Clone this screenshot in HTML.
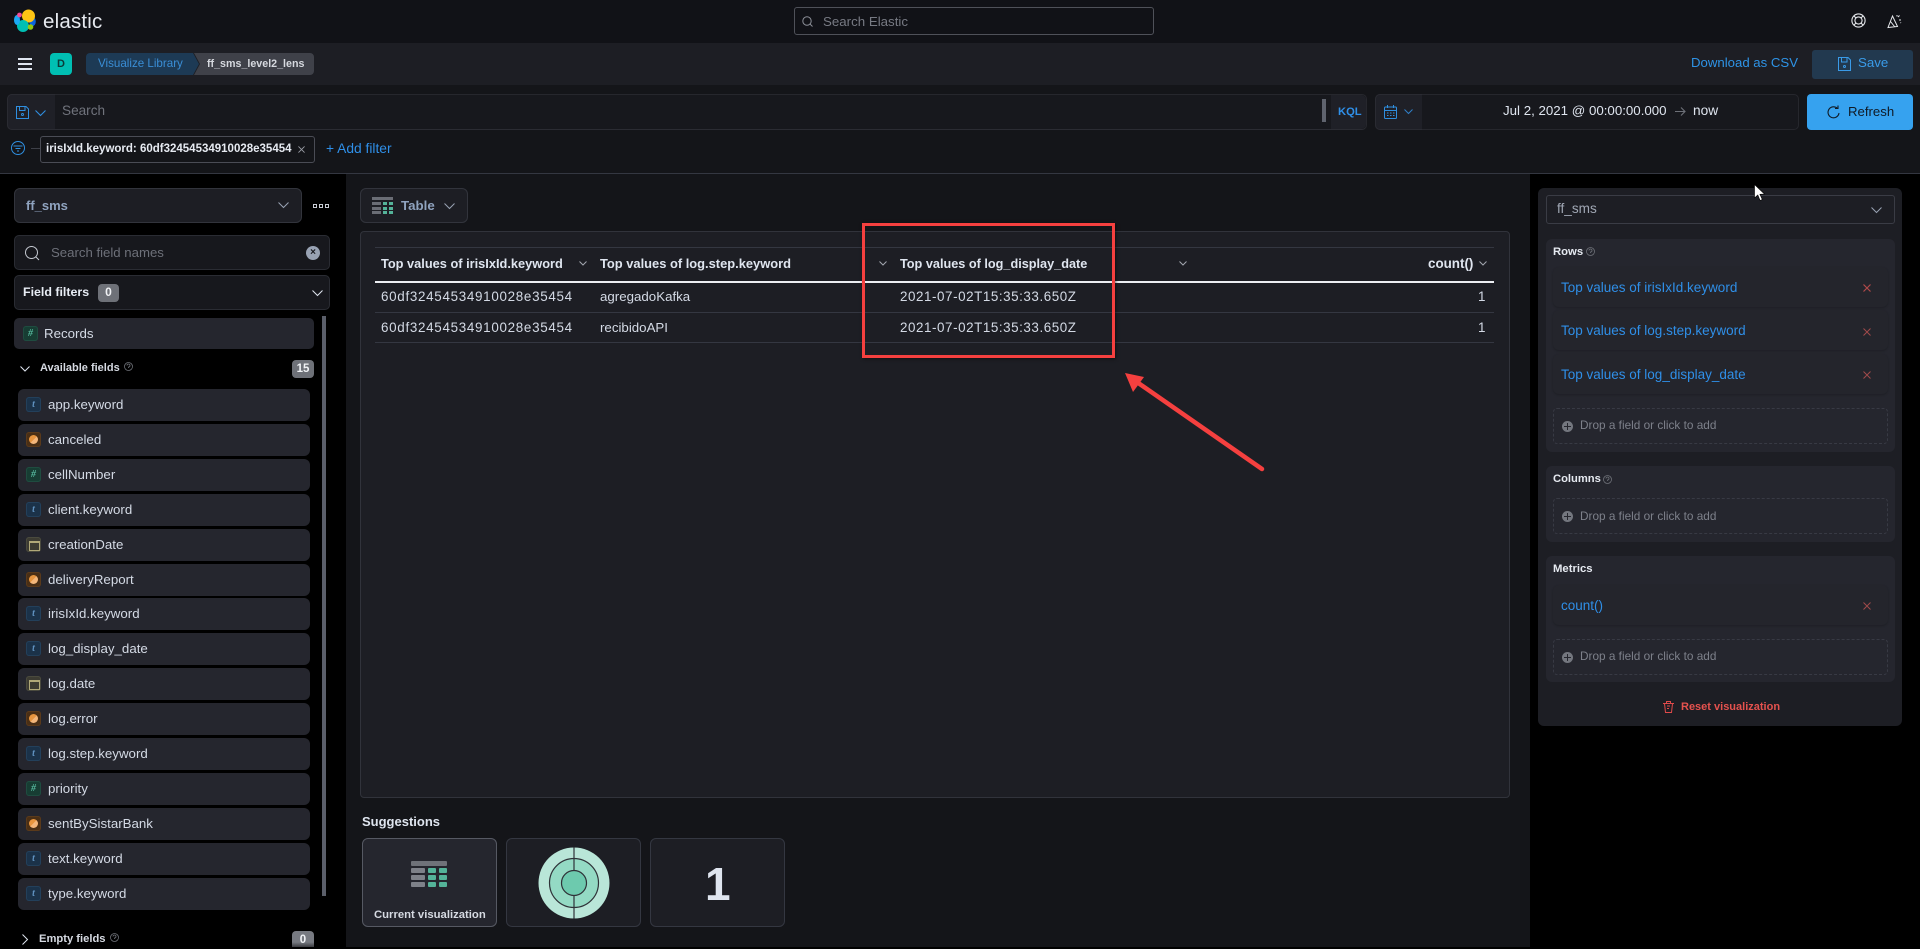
<!DOCTYPE html>
<html lang="en"><head><meta charset="utf-8"><title>ff_sms_level2_lens - Elastic</title>
<style>
*{box-sizing:border-box}
html,body{margin:0;padding:0;width:1920px;height:947px;overflow:hidden;background:#000;font-family:"Liberation Sans",sans-serif;color:#dfe5ef}
.a{position:absolute}
.t{position:absolute;white-space:nowrap;line-height:20px;height:20px;font-size:14px;margin-top:1px}
.b{font-weight:700}
.fld{position:absolute;left:18px;width:292px;height:32px;background:#25262e;border-radius:6px}
.fld .t{left:30px;top:6px;color:#d4dae5;font-size:13.3px;margin-top:0}
.tok{position:absolute;left:8px;top:8px;width:15px;height:15px;border-radius:3px;font:italic 700 10px/15px "Liberation Serif",serif;text-align:center}
.s{background:#1b3249;color:#6092c0;box-shadow:inset 0 0 0 1px #23405b}
.n{background:#173d33;color:#54b399;box-shadow:inset 0 0 0 1px #1f4c40}
.o{background:#4a2f15;box-shadow:inset 0 0 0 1px #5a3a1b}
.o:after{content:"";position:absolute;left:3px;top:3px;width:9px;height:9px;border-radius:50%;background:linear-gradient(135deg,#e7953f 50%,#f3b67a 50%)}
.d{background:#3c3b32;box-shadow:inset 0 0 0 1px #4a4a3e}
.d:after{content:"";position:absolute;left:3px;top:4px;width:9px;height:7px;border:1px solid #b0a878;border-top-width:2px}
.box{position:absolute;background:#1d1e24;border:1px solid #343741;border-radius:6px}
.grp{position:absolute;left:1546px;width:349px;background:#25262e;border-radius:6px}
.item{position:absolute;left:1553px;width:335px;height:40px;background:#24252c;border-radius:6px;box-shadow:0 1px 2px rgba(0,0,0,.2)}
.item .t{left:8px;top:10px;color:#2f8fe8;font-size:13.5px}
.drop{position:absolute;left:1553px;width:335px;height:36px;border:1px dashed #383a44;border-radius:4px}
.drop .t{left:26px;top:5px;font-size:11.8px;color:#7d808a}
.drop i{position:absolute;left:8px;top:12px;width:11px;height:11px;border-radius:50%;background:#74777f}
.drop i:before{content:"";position:absolute;left:2px;top:5px;width:7px;height:1px;background:#25262e}
.drop i:after{content:"";position:absolute;left:5px;top:2px;width:1px;height:7px;background:#25262e}
.tile{position:absolute;top:838px;width:135px;height:89px;background:#1d1e24;border:1px solid #343741;border-radius:6px}
.hr{position:absolute;height:1px;background:#343741}
.id{letter-spacing:.7px}
.dt{letter-spacing:.56px}
svg{position:absolute;overflow:visible}
</style></head><body>

<!-- top header -->
<div class="a" style="left:0;top:0;width:1920px;height:43px;background:#111217"></div>
<svg style="left:14px;top:10px" width="22" height="22" viewBox="0 0 22 22">
<ellipse cx="18.500" cy="11.500" rx="3.300" ry="4.600" fill="#0b64dd"/><circle cx="14.500" cy="6" r="6.500" fill="#fec514"/><circle cx="9" cy="16" r="6" fill="#00bfb3"/><ellipse cx="3" cy="10" rx="3" ry="5" fill="#1ba9f5"/><circle cx="5.500" cy="5" r="2.400" fill="#f04e98"/><circle cx="16.500" cy="17" r="2.800" fill="#93c90e"/></svg>
<div class="t" style="left:43px;top:11px;font-size:20.500px;color:#e6e9ef;letter-spacing:.2px">elastic</div>
<div class="a" style="left:794px;top:7px;width:360px;height:28px;border:1px solid #4f5159;border-radius:3px;background:#111217"></div>
<svg style="left:802px;top:16px" width="11" height="11" viewBox="0 0 11 11" fill="none" stroke="#8d9099" stroke-width="1"><circle cx="5" cy="5" r="4.200"/><path d="M8 8l2.500 2.500"/></svg>
<div class="t" style="left:823px;top:11px;font-size:13.300px;color:#777a83">Search Elastic</div>
<svg style="left:1851px;top:13px" width="15" height="15" viewBox="0 0 15 15" fill="none" stroke="#e8eaee" stroke-width="1.100"><circle cx="7.500" cy="7.500" r="6.600"/><circle cx="7.500" cy="7.500" r="3.600"/><path d="M3 3l2 2M12 3l-2 2M3 12l2-2M12 12l-2-2"/></svg>
<svg style="left:1887px;top:14px" width="15" height="15" viewBox="0 0 15 15" fill="none" stroke="#e8eaee" stroke-width="1"><path d="M1 13.500L5.500 2 10.500 12.500zM3.500 7.500l4 5M11 3l1.500-1.500M12 6h2M10 1v1.500M13.500 8.500l.5.5"/></svg>

<!-- nav -->
<div class="a" style="left:0;top:43px;width:1920px;height:42px;background:#1d1e24"></div>
<div class="a" style="left:18px;top:58px;width:14px;height:2px;background:#dfe5ef;box-shadow:0 5px 0 #dfe5ef,0 10px 0 #dfe5ef"></div>
<div class="a" style="left:50px;top:53px;width:22px;height:22px;border-radius:4px;background:#00bfb3;color:#0a3b38;font:700 11px/22px 'Liberation Sans',sans-serif;text-align:center">D</div>
<svg style="left:86px;top:53px" width="228" height="22" viewBox="0 0 228 22"><path d="M4 0H107l6 11-6 11H4a4 4 0 0 1-4-4V4a4 4 0 0 1 4-4z" fill="#1d3a55" /><path d="M108 0H224a4 4 0 0 1 4 4V18a4 4 0 0 1-4 4H108l6-11z" fill="#3f4149"/></svg>
<div class="t" style="left:98px;top:53px;font-size:11.600px;color:#3a8ed6">Visualize Library</div>
<div class="t b" style="left:207px;top:53px;font-size:10.700px;color:#d6d9df">ff_sms_level2_lens</div>
<div class="t" style="left:1691px;top:52px;font-size:13.200px;color:#2e93e6">Download as CSV</div>
<div class="a" style="left:1812px;top:50px;width:101px;height:29px;border-radius:3px;background:#22394f"></div>
<svg style="left:1838px;top:57px" width="13" height="14" viewBox="0 0 13 14" fill="none" stroke="#3a9be8" stroke-width="1"><path d="M.5.500H10l2.500 2.500V13.500H.5zM3.500.5V5H9V.5"/><circle cx="6.500" cy="9.500" r="1"/></svg>
<div class="t" style="left:1858px;top:52px;font-size:13.300px;color:#3a9be8">Save</div>

<!-- query bar -->
<div class="a" style="left:0;top:85px;width:1920px;height:88px;background:#141519"></div>
<div class="a" style="left:0;top:173px;width:1920px;height:1px;background:#343741"></div>
<div class="a" style="left:7px;top:94px;width:1360px;height:36px;border:1px solid #26272d;border-radius:5px;background:#17181d;border-bottom-color:#2b2c33"></div>
<div class="a" style="left:7px;top:94px;width:48px;height:36px;background:#1f2027;border:1px solid #2a2b32;border-right:0;border-radius:5px 0 0 5px"></div>
<svg style="left:16px;top:106px" width="13" height="13" viewBox="0 0 13 13" fill="none" stroke="#2f8fe0" stroke-width="1"><path d="M.5.500H10l2.500 2.500V12.500H.5zM3.500.5V4.500H9V.5"/><circle cx="6.500" cy="8.500" r="1"/></svg>
<svg style="left:35px;top:110px" width="11" height="6" viewBox="0 0 11 6" fill="none" stroke="#2f8fe0" stroke-width="1.100"><path d="M.5.500l5 5 5-5"/></svg>
<div class="t" style="left:62px;top:100px;font-size:13.600px;color:#70737c">Search</div>
<div class="a" style="left:1322px;top:99px;width:4px;height:23px;background:#5f636e"></div>
<div class="a" style="left:1331px;top:95px;width:35px;height:34px;background:#1f2027;border-radius:0 5px 5px 0"></div>
<div class="t b" style="left:1338px;top:101px;font-size:11.200px;color:#2f8fe8">KQL</div>

<div class="a" style="left:1375px;top:94px;width:424px;height:36px;border:1px solid #26272d;border-radius:5px;background:#17181d"></div>
<div class="a" style="left:1375px;top:94px;width:47px;height:36px;background:#1f2027;border:1px solid #2a2b32;border-right:0;border-radius:5px 0 0 5px"></div>
<svg style="left:1384px;top:105px" width="13" height="14" viewBox="0 0 13 14" fill="none" stroke="#2f8fe0" stroke-width="1"><rect x=".5" y="2" width="12" height="11.500" rx="1"/><path d="M.5 5.500h12M3.500 0v3M9.500 0v3M3 8h1.500M6 8h1.500M9 8h1.500M3 10.500h1.500M6 10.500h1.500M9 10.500h1.500"/></svg>
<svg style="left:1404px;top:109px" width="9" height="5" viewBox="0 0 9 5" fill="none" stroke="#2f7fc8" stroke-width="1"><path d="M.5.500l4 4 4-4"/></svg>
<div class="t" style="left:1503px;top:100px;font-size:13.300px;color:#dfe5ef">Jul 2, 2021 @ 00:00:00.000</div>
<svg style="left:1675px;top:107px" width="11" height="9" viewBox="0 0 11 9" fill="none" stroke="#6d7078" stroke-width="1.100"><path d="M0 4.500h10M6 .5l4 4-4 4"/></svg>
<div class="t" style="left:1693px;top:100px;font-size:13.700px;color:#dfe5ef">now</div>
<div class="a" style="left:1807px;top:94px;width:106px;height:36px;background:#36a2ef;border-radius:4px"></div>
<svg style="left:1827px;top:105px" width="13" height="14" viewBox="0 0 13 14" fill="none" stroke="#0f1a25" stroke-width="1.100"><path d="M10.500 3.500A5.500 5.500 0 1 0 12 8M8 3.500h3V.5"/></svg>
<div class="t" style="left:1848px;top:101px;font-size:13.200px;color:#101a25">Refresh</div>

<!-- filter row -->
<svg style="left:11px;top:141px" width="14" height="14" viewBox="0 0 14 14" fill="none" stroke="#2f8fe0" stroke-width="1"><circle cx="7" cy="7" r="6.500"/><path d="M2.500 5h9M4.500 7.500h5M6 10h2"/></svg>
<div class="a" style="left:31px;top:148px;width:9px;height:1px;background:#3e4048"></div>
<div class="a" style="left:40px;top:136px;width:275px;height:27px;border:1px solid #4a4c55;border-radius:3px;background:#141519"></div>
<div class="t b" style="left:46px;top:138px;font-size:11.500px;color:#e6eaf1">irisIxId.keyword: 60df32454534910028e35454</div>
<svg style="left:298px;top:146px" width="7" height="7" viewBox="0 0 8 8" stroke="#9a9da5" stroke-width="1"><path d="M.5.500l7 7M7.500.5l-7 7"/></svg>
<div class="t" style="left:326px;top:138px;font-size:13.800px;color:#2f8fe8">+ Add filter</div>

<!-- main bg -->
<div class="a" style="left:346px;top:174px;width:1184px;height:773px;background:#141519"></div>

<!-- sidebar -->
<div class="box" style="left:14px;top:188px;width:288px;height:35px;border-color:#32343c"></div>
<div class="t b" style="left:26px;top:195px;font-size:13px;color:#8fa3bf">ff_sms</div>
<svg style="left:278px;top:202px" width="11" height="6" viewBox="0 0 11 6" fill="none" stroke="#98a2b3" stroke-width="1"><path d="M.5.500l5 5 5-5"/></svg>
<div class="a" style="left:313px;top:204px;width:4px;height:4px;border:1px solid #c8ccd4;box-shadow:6px 0 0 -1px #000,6px 0 0 0 #c8ccd4,12px 0 0 -1px #000,12px 0 0 0 #c8ccd4"></div>
<div class="a" style="left:14px;top:235px;width:316px;height:35px;border:1px solid #2a2c33;border-radius:5px;background:#17181d"></div>
<svg style="left:25px;top:246px" width="15" height="15" viewBox="0 0 15 15" fill="none" stroke="#c5c9d1" stroke-width="1"><circle cx="6.500" cy="6.500" r="6"/><path d="M11 11l3 3"/></svg>
<div class="t" style="left:51px;top:242px;font-size:13.200px;color:#6d7079">Search field names</div>
<div class="a" style="left:306px;top:246px;width:14px;height:14px;border-radius:50%;background:#98a2b3;color:#17181d;font:700 10px/14px 'Liberation Sans',sans-serif;text-align:center">×</div>
<div class="a" style="left:14px;top:275px;width:316px;height:35px;border:1px solid #2a2c33;border-radius:5px;background:#17181d"></div>
<div class="t" style="left:23px;top:281px;font-size:12.400px;color:#e8edf5;font-weight:700">Field filters</div>
<div class="a b" style="left:98px;top:284px;width:21px;height:18px;border-radius:4px;background:#6e7178;color:#f0f2f5;font-size:12px;line-height:17px;text-align:center">0</div>
<svg style="left:312px;top:290px" width="11" height="6" viewBox="0 0 11 6" fill="none" stroke="#dfe5ef" stroke-width="1"><path d="M.5.500l5 5 5-5"/></svg>
<div class="a" style="left:14px;top:318px;width:300px;height:31px;background:#25262e;border-radius:5px"></div>
<div class="tok n" style="left:23px;top:326px;background:#173d33">#</div>
<div class="t" style="left:44px;top:323px;font-size:13.300px;color:#d4dae5">Records</div>
<div class="a" style="left:322px;top:316px;width:4px;height:580px;background:#5b5f6a"></div>
<svg style="left:20px;top:366px" width="10" height="6" viewBox="0 0 10 6" fill="none" stroke="#dfe5ef" stroke-width="1"><path d="M.5.500l4.500 4.500 4.500-4.500"/></svg>
<div class="t b" style="left:40px;top:357px;font-size:11px;color:#d6dae2">Available fields</div>
<svg style="left:124px;top:362px" width="9" height="9" viewBox="0 0 9 9" fill="none" stroke="#6e7178" stroke-width=".8"><circle cx="4.500" cy="4.500" r="4"/><path d="M3 3.500a1.500 1.500 0 1 1 1.500 1.500v1"/></svg>
<div class="a b" style="left:292px;top:360px;width:22px;height:18px;border-radius:4px;background:#6e7178;color:#f0f2f5;font-size:11.500px;line-height:18px;text-align:center">15</div>

<div class="fld" style="top:389px"><div class="tok s">t</div><div class="t">app.keyword</div></div>
<div class="fld" style="top:424px"><div class="tok o"></div><div class="t">canceled</div></div>
<div class="fld" style="top:459px"><div class="tok n">#</div><div class="t">cellNumber</div></div>
<div class="fld" style="top:494px"><div class="tok s">t</div><div class="t">client.keyword</div></div>
<div class="fld" style="top:529px"><div class="tok d"></div><div class="t">creationDate</div></div>
<div class="fld" style="top:564px"><div class="tok o"></div><div class="t">deliveryReport</div></div>
<div class="fld" style="top:598px"><div class="tok s">t</div><div class="t">irisIxId.keyword</div></div>
<div class="fld" style="top:633px"><div class="tok s">t</div><div class="t">log_display_date</div></div>
<div class="fld" style="top:668px"><div class="tok d"></div><div class="t">log.date</div></div>
<div class="fld" style="top:703px"><div class="tok o"></div><div class="t">log.error</div></div>
<div class="fld" style="top:738px"><div class="tok s">t</div><div class="t">log.step.keyword</div></div>
<div class="fld" style="top:773px"><div class="tok n">#</div><div class="t">priority</div></div>
<div class="fld" style="top:808px"><div class="tok o"></div><div class="t">sentBySistarBank</div></div>
<div class="fld" style="top:843px"><div class="tok s">t</div><div class="t">text.keyword</div></div>
<div class="fld" style="top:878px"><div class="tok s">t</div><div class="t">type.keyword</div></div>
<svg style="left:22px;top:934px" width="6" height="11" viewBox="0 0 6 11" fill="none" stroke="#dfe5ef" stroke-width="1"><path d="M.5.500l5 5-5 5"/></svg>
<div class="t b" style="left:39px;top:928px;font-size:11.200px;color:#d6dae2">Empty fields</div>
<svg style="left:110px;top:933px" width="9" height="9" viewBox="0 0 9 9" fill="none" stroke="#6e7178" stroke-width=".8"><circle cx="4.500" cy="4.500" r="4"/><path d="M3 3.500a1.500 1.500 0 1 1 1.500 1.500v1"/></svg>
<div class="a b" style="left:292px;top:931px;width:22px;height:16px;border-radius:4px 4px 0 0;background:linear-gradient(#777a81 70%,#3a3b40);color:#f0f2f5;font-size:11.500px;line-height:18px;text-align:center">0</div>

<!-- chart switcher -->
<div class="box" style="left:360px;top:188px;width:108px;height:35px;border-color:#32343c"></div>
<svg style="left:372px;top:197px" width="21" height="17" viewBox="0 0 21 17"><rect width="21" height="3" fill="#6a6d75"/><g fill="#6a6d75"><rect y="5" width="9" height="3"/><rect y="10" width="9" height="3"/><rect y="14" width="9" height="3"/></g><g fill="#54b399"><rect x="11" y="5" width="4" height="3"/><rect x="17" y="5" width="4" height="3"/><rect x="11" y="10" width="4" height="3"/><rect x="17" y="10" width="4" height="3"/><rect x="11" y="14" width="4" height="3"/><rect x="17" y="14" width="4" height="3"/></g></svg>
<div class="t b" style="left:401px;top:195px;font-size:13.300px;color:#8fa3bf">Table</div>
<svg style="left:444px;top:203px" width="11" height="6" viewBox="0 0 11 6" fill="none" stroke="#98a2b3" stroke-width="1"><path d="M.5.500l5 5 5-5"/></svg>

<!-- workspace -->
<div class="box" style="left:360px;top:231px;width:1150px;height:567px;border-color:#31333b;border-radius:4px"></div>
<div class="hr" style="left:375px;top:247px;width:1119px"></div>
<div class="a" style="left:375px;top:281px;width:1119px;height:1.500px;background:#eceef2"></div>
<div class="hr" style="left:375px;top:312px;width:1119px"></div>
<div class="hr" style="left:375px;top:342px;width:1119px"></div>
<div class="t b" style="left:381px;top:253px;font-size:12.800px;color:#dfe5ef">Top values of irisIxId.keyword</div>
<div class="t b" style="left:600px;top:253px;font-size:12.900px;color:#dfe5ef">Top values of log.step.keyword</div>
<div class="t b" style="left:900px;top:253px;font-size:12.700px;color:#dfe5ef">Top values of log_display_date</div>
<div class="t b" style="left:1428px;top:253px;font-size:13.400px;color:#dfe5ef">count()</div>
<svg style="left:579px;top:261px" width="8" height="5" viewBox="0 0 8 5" fill="none" stroke="#a3a7b0"><path d="M.5.500l3.500 3.500 3.500-3.500"/></svg>
<svg style="left:879px;top:261px" width="8" height="5" viewBox="0 0 8 5" fill="none" stroke="#a3a7b0"><path d="M.5.500l3.500 3.500 3.500-3.500"/></svg>
<svg style="left:1179px;top:261px" width="8" height="5" viewBox="0 0 8 5" fill="none" stroke="#a3a7b0"><path d="M.5.500l3.500 3.500 3.500-3.500"/></svg>
<svg style="left:1479px;top:261px" width="8" height="5" viewBox="0 0 8 5" fill="none" stroke="#a3a7b0"><path d="M.5.500l3.500 3.500 3.500-3.500"/></svg>
<div class="t id" style="left:381px;top:286px;font-size:13.400px;color:#d4dae5">60df32454534910028e35454</div>
<div class="t" style="left:600px;top:286px;font-size:13.300px;color:#d4dae5">agregadoKafka</div>
<div class="t dt" style="left:900px;top:286px;font-size:13.400px;color:#d4dae5">2021-07-02T15:35:33.650Z</div>
<div class="t" style="left:1478px;top:286px;font-size:13.400px;color:#d4dae5">1</div>
<div class="t id" style="left:381px;top:317px;font-size:13.400px;color:#d4dae5">60df32454534910028e35454</div>
<div class="t" style="left:600px;top:317px;font-size:13.300px;color:#d4dae5">recibidoAPI</div>
<div class="t dt" style="left:900px;top:317px;font-size:13.400px;color:#d4dae5">2021-07-02T15:35:33.650Z</div>
<div class="t" style="left:1478px;top:317px;font-size:13.400px;color:#d4dae5">1</div>

<!-- annotation -->
<div class="a" style="left:862px;top:223px;width:253px;height:135px;border:3px solid #f5403f;box-shadow:1px 1px 3px rgba(0,0,0,.5)"></div>
<svg style="left:1120px;top:368px" width="150" height="110" viewBox="0 0 150 110"><path d="M142 101L14 12" stroke="#f5403f" stroke-width="4.500" stroke-linecap="round" fill="none"/><path d="M5 5L24 9 13 24z" fill="#f5403f"/></svg>

<!-- suggestions -->
<div class="t b" style="left:362px;top:811px;font-size:13px;color:#dfe5ef">Suggestions</div>
<div class="tile" style="left:362px;background:#25262e;border-color:#565963"></div>
<svg style="left:411px;top:861px" width="36" height="27" viewBox="0 0 36 27"><rect width="36" height="5" rx="1" fill="#6f7279"/><g fill="#7e8189"><rect y="7" width="14" height="5" rx="1"/><rect y="14" width="14" height="5" rx="1"/><rect y="21" width="14" height="5" rx="1"/></g><g fill="#54b399"><rect x="17" y="7" width="8" height="5" rx="1"/><rect x="28" y="7" width="8" height="5" rx="1"/><rect x="17" y="14" width="8" height="5" rx="1"/><rect x="28" y="14" width="8" height="5" rx="1"/><rect x="17" y="21" width="8" height="5" rx="1"/><rect x="28" y="21" width="8" height="5" rx="1"/></g></svg>
<div class="t b" style="left:374px;top:904px;font-size:11.300px;color:#d6dae2">Current visualization</div>
<div class="tile" style="left:506px"></div>
<svg style="left:538px;top:847px" width="72" height="72" viewBox="0 0 72 72"><circle cx="36" cy="36" r="35.500" fill="#b9e6d8"/><circle cx="36" cy="36" r="24.500" fill="#94dac4" stroke="#2f3238" stroke-width="1.200"/><circle cx="36" cy="36" r="12.500" fill="#6dcaae" stroke="#2f3238" stroke-width="1.200"/><path d="M36 .5V23.500M36 48.500V71.500" stroke="#2f3238" stroke-width="1.200"/></svg>
<div class="tile" style="left:650px"></div>
<div class="t b" style="left:705px;top:861px;font-size:46px;line-height:44px;height:44px;color:#dfe5ef">1</div>

<!-- right panel -->
<div class="a" style="left:1538px;top:188px;width:364px;height:538px;background:#1d1e24;border-radius:6px"></div>
<div class="a" style="left:1546px;top:195px;width:349px;height:29px;border:1px solid #3a3c45;border-radius:3px;background:#1d1e24"></div>
<div class="t" style="left:1557px;top:198px;font-size:13.600px;color:#a0a7b4">ff_sms</div>
<svg style="left:1871px;top:207px" width="11" height="6" viewBox="0 0 11 6" fill="none" stroke="#98a2b3" stroke-width="1"><path d="M.5.500l5 5 5-5"/></svg>

<div class="grp" style="top:239px;height:213px"></div>
<div class="t b" style="left:1553px;top:241px;font-size:11.300px;color:#e6eaf1">Rows</div>
<svg style="left:1586px;top:247px" width="9" height="9" viewBox="0 0 9 9" fill="none" stroke="#6e7178" stroke-width=".8"><circle cx="4.500" cy="4.500" r="4"/><path d="M3 3.500a1.500 1.500 0 1 1 1.500 1.500v1"/></svg>
<div class="item" style="top:267px"><div class="t">Top values of irisIxId.keyword</div></div>
<div class="item" style="top:310px"><div class="t">Top values of log.step.keyword</div></div>
<div class="item" style="top:354px"><div class="t">Top values of log_display_date</div></div>
<svg style="left:1863px;top:284px" width="8" height="8" viewBox="0 0 8 8" stroke="#b04a4a" stroke-width="1.200"><path d="M.5.500l7 7M7.500.5l-7 7"/></svg>
<svg style="left:1863px;top:328px" width="8" height="8" viewBox="0 0 8 8" stroke="#a04a4a"><path d="M.5.500l7 7M7.500.5l-7 7"/></svg>
<svg style="left:1863px;top:371px" width="8" height="8" viewBox="0 0 8 8" stroke="#a04a4a"><path d="M.5.500l7 7M7.500.5l-7 7"/></svg>
<div class="drop" style="top:408px"><i></i><div class="t">Drop a field or click to add</div></div>

<div class="grp" style="top:466px;height:76px"></div>
<div class="t b" style="left:1553px;top:468px;font-size:11.200px;color:#e6eaf1">Columns</div>
<svg style="left:1603px;top:475px" width="9" height="9" viewBox="0 0 9 9" fill="none" stroke="#6e7178" stroke-width=".8"><circle cx="4.500" cy="4.500" r="4"/><path d="M3 3.500a1.500 1.500 0 1 1 1.500 1.500v1"/></svg>
<div class="drop" style="top:498px"><i></i><div class="t" style="top:6px">Drop a field or click to add</div></div>

<div class="grp" style="top:556px;height:126px"></div>
<div class="t b" style="left:1553px;top:558px;font-size:11.300px;color:#e6eaf1">Metrics</div>
<div class="item" style="top:585px"><div class="t">count()</div></div>
<svg style="left:1863px;top:602px" width="8" height="8" viewBox="0 0 8 8" stroke="#a04a4a"><path d="M.5.500l7 7M7.500.5l-7 7"/></svg>
<div class="drop" style="top:639px"><i></i><div class="t">Drop a field or click to add</div></div>

<svg style="left:1663px;top:701px" width="11" height="12" viewBox="0 0 11 12" fill="none" stroke="#e04a4a" stroke-width="1"><path d="M0 2.500h11M3.500 2.500V.5h4v2M1.500 2.500l1 9h6l1-9M4 5h3M4 7.500h2"/></svg>
<div class="t b" style="left:1681px;top:696px;font-size:11px;color:#e5524e">Reset visualization</div>

<!-- cursor -->
<svg style="left:1754px;top:184px" width="12" height="18" viewBox="0 0 12 18"><path d="M.5.500V14l3.300-3 2.300 5.500 2.200-1L5.900 10.300 10.500 10z" fill="#fff" stroke="#000" stroke-width=".6"/></svg>

</body></html>
